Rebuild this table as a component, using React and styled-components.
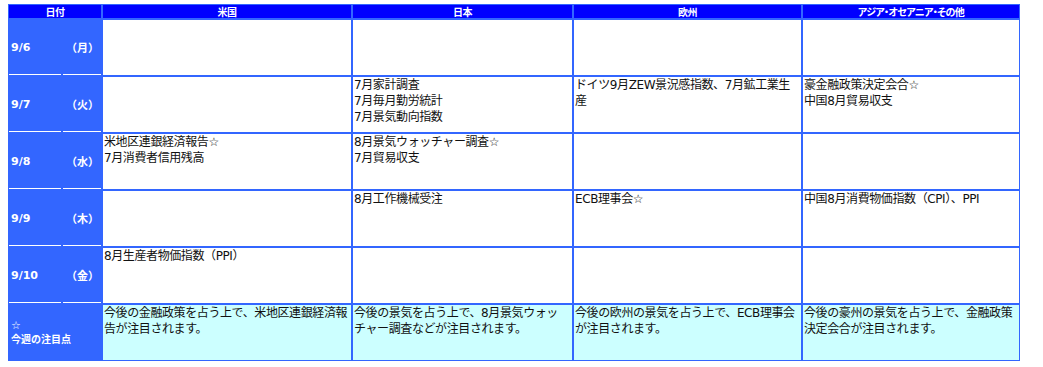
import React from "react";
import styled, { createGlobalStyle } from "styled-components";

const Global = createGlobalStyle`
  html, body { margin: 0; padding: 0; background: #fff; }
  body { font-family: "DejaVu Sans", "Noto Sans CJK JP", sans-serif; }
`;

const Page = styled.div`
  padding: 4px 0 0 8px;
`;

const Grid = styled.div`
  display: grid;
  width: max-content;
  grid-template-columns: 52px 38px 248px 219px 227px 216px;
  grid-template-rows: 13px repeat(6, 55px);
  gap: 2px;
  padding: 1px;
  background: #3366ff;
`;

const HeadCell = styled.div`
  grid-column: ${(p) => (p.$span ? `span ${p.$span}` : "auto")};
  background: #0000ff;
  color: #fff;
  font-family: "Noto Sans CJK JP", sans-serif;
  font-feature-settings: "palt";
  font-weight: 700;
  font-size: 10px;
  letter-spacing: -0.6px;
  line-height: 13px;
  text-align: center;
  overflow: hidden;
  white-space: nowrap;
`;

const DateCell = styled.div`
  display: flex;
  align-items: center;
  padding-left: ${(p) => (p.$wd ? "3px" : "2px")};
  color: #fff;
  font-family: "DejaVu Sans", "Noto Sans CJK JP", sans-serif;
  font-weight: 700;
  font-size: 11px;
  border-bottom: 1px solid #fff;
  white-space: nowrap;
`;

const NoteLabel = styled.div`
  grid-column: span 2;
  display: flex;
  flex-direction: column;
  justify-content: center;
  padding-left: 2px;
  color: #fff;
  font-family: "DejaVu Sans", "Noto Sans CJK JP", sans-serif;
  font-weight: 700;
  font-size: 10px;
  line-height: 14px;
`;

const Star = styled.span`
  font-size: 11px;
`;

const Cell = styled.div`
  background: ${(p) => (p.$note ? "#ccffff" : "#ffffff")};
  color: #111;
  font-family: "DejaVu Sans", "Noto Sans CJK JP", sans-serif;
  font-size: 12px;
  letter-spacing: -0.4px;
  line-height: 16px;
  padding: 0 1px;
  overflow: hidden;
  line-break: strict;
`;

const Line = styled.div``;

const rows = [
  { d: "9/6", w: "（月）", c: [[], [], [], []] },
  {
    d: "9/7",
    w: "（火）",
    c: [
      [],
      ["7月家計調査", "7月毎月勤労統計", "7月景気動向指数"],
      ["ドイツ9月ZEW景況感指数、7月鉱工業生産"],
      ["豪金融政策決定会合☆", "中国8月貿易収支"],
    ],
  },
  {
    d: "9/8",
    w: "（水）",
    c: [
      ["米地区連銀経済報告☆", "7月消費者信用残高"],
      ["8月景気ウォッチャー調査☆", "7月貿易収支"],
      [],
      [],
    ],
  },
  {
    d: "9/9",
    w: "（木）",
    c: [[], ["8月工作機械受注"], ["ECB理事会☆"], ["中国8月消費物価指数（CPI）、PPI"]],
  },
  { d: "9/10", w: "（金）", c: [["8月生産者物価指数（PPI）"], [], [], []] },
];

const notes = [
  "今後の金融政策を占う上で、米地区連銀経済報告が注目されます。",
  "今後の景気を占う上で、8月景気ウォッ\u200Bチャー調査などが注目されます。",
  "今後の欧州の景気を占う上で、ECB理事会が注目されます。",
  "今後の豪州の景気を占う上で、金融政策決定会合が注目されます。",
];

const heads = ["米国", "日本", "欧州", "アジア・オセアニア・その他"];

export default function App() {
  return (
    <Page lang="ja">
      <Global />
      <Grid>
        <HeadCell $span={2}>日付</HeadCell>
        {heads.map((h) => (
          <HeadCell key={h}>{h}</HeadCell>
        ))}
        {rows.map((r) => (
          <React.Fragment key={r.d}>
            <DateCell>{r.d}</DateCell>
            <DateCell $wd>{r.w}</DateCell>
            {r.c.map((lines, i) => (
              <Cell key={i}>
                {lines.map((l) => (
                  <Line key={l}>{l}</Line>
                ))}
              </Cell>
            ))}
          </React.Fragment>
        ))}
        <NoteLabel>
          <Star>☆</Star>
          <span>今週の注目点</span>
        </NoteLabel>
        {notes.map((n, i) => (
          <Cell key={i} $note>
            {n}
          </Cell>
        ))}
      </Grid>
    </Page>
  );
}
